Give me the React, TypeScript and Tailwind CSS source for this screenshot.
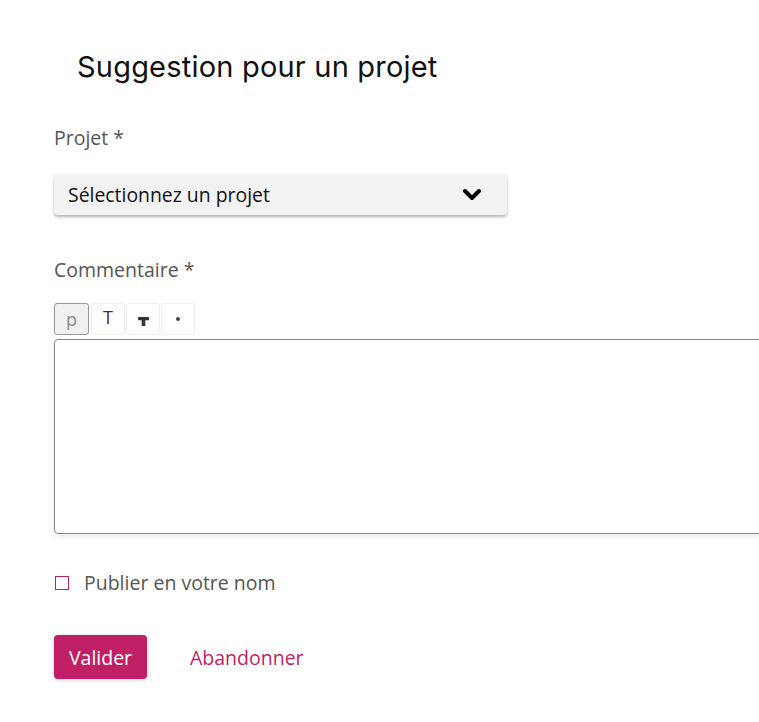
import React from "react";

export default function App() {
  return (
    <div className="w-[759px] h-[722px] overflow-hidden bg-white" style={{ fontFamily: '"Open Sans", "Liberation Sans", sans-serif' }}>
      <div className="pl-[54px] pt-[48px]">
        <h1 className="ml-[23px] text-[29px] leading-[38px] text-[#111] tracking-[0.2px]" style={{ fontFamily: 'Inter, "DejaVu Sans", sans-serif', fontWeight: 400 }}>
          Suggestion pour un projet
        </h1>

        <div className="mt-[39px] text-[19.5px] leading-[26px] text-[#555]">Projet *</div>

        <div className="mt-[23px] w-[453px] h-[41px] rounded-[4px] bg-[#f2f2f2] shadow-[0_2px_3px_rgba(0,0,0,0.3)] flex items-center justify-between pl-[14px] pr-[25px]">
          <span className="text-[19.4px] text-[#111]">Sélectionnez un projet</span>
          <svg width="20" height="14" viewBox="0 0 20 14">
            <polyline points="3,3 10,10 17,3" fill="none" stroke="#000" strokeWidth="4" strokeLinecap="round" strokeLinejoin="round" />
          </svg>
        </div>

        <div className="mt-[42px] text-[19.5px] leading-[26px] text-[#555]">Commentaire *</div>

        <div className="mt-[20px] flex gap-[1px]">
          <div className="w-[35px] h-[32px] rounded-[3px] border border-[#999] bg-[#f0f0f0] flex items-center justify-center text-[18px] text-[#888]">p</div>
          <div className="ml-[1px] w-[34px] h-[32px] rounded-[3px] border border-[#eee] bg-white flex items-center justify-center text-[18px] text-[#333] pb-[3px]">T</div>
          <div className="w-[34px] h-[32px] rounded-[3px] border border-[#eee] bg-white flex items-center justify-center pt-[4px]">
            <svg width="11" height="9" viewBox="0 0 12 10">
              <path d="M0 0 H12 V3.5 H8 V10 H4 V3.5 H0 Z" fill="#333" />
            </svg>
          </div>
          <div className="w-[34px] h-[32px] rounded-[3px] border border-[#eee] bg-white flex items-center justify-center">
            <span className="w-[4px] h-[4px] rounded-full bg-[#444]" />
          </div>
        </div>

        <div className="mt-[4px] w-[740px] h-[195px] rounded-l-[4px] border border-[#888] bg-white shadow-[0_3px_6px_rgba(0,0,0,0.08)]" />

        <label className="mt-[34px] flex items-center gap-[15px]">
          <span className="ml-[1px] w-[14px] h-[14px] border border-[#c01f66] bg-white" />
          <span className="text-[19.5px] text-[#555]">Publier en votre nom</span>
        </label>

        <div className="mt-[38px] flex items-center gap-[43px]">
          <button className="w-[93px] h-[44px] rounded-[4px] bg-[#c01f66] text-white text-[19.5px] shadow-[0_1px_4px_rgba(0,0,0,0.2)]">Valider</button>
          <span className="text-[19.5px] text-[#c01f66]">Abandonner</span>
        </div>
      </div>
    </div>
  );
}
